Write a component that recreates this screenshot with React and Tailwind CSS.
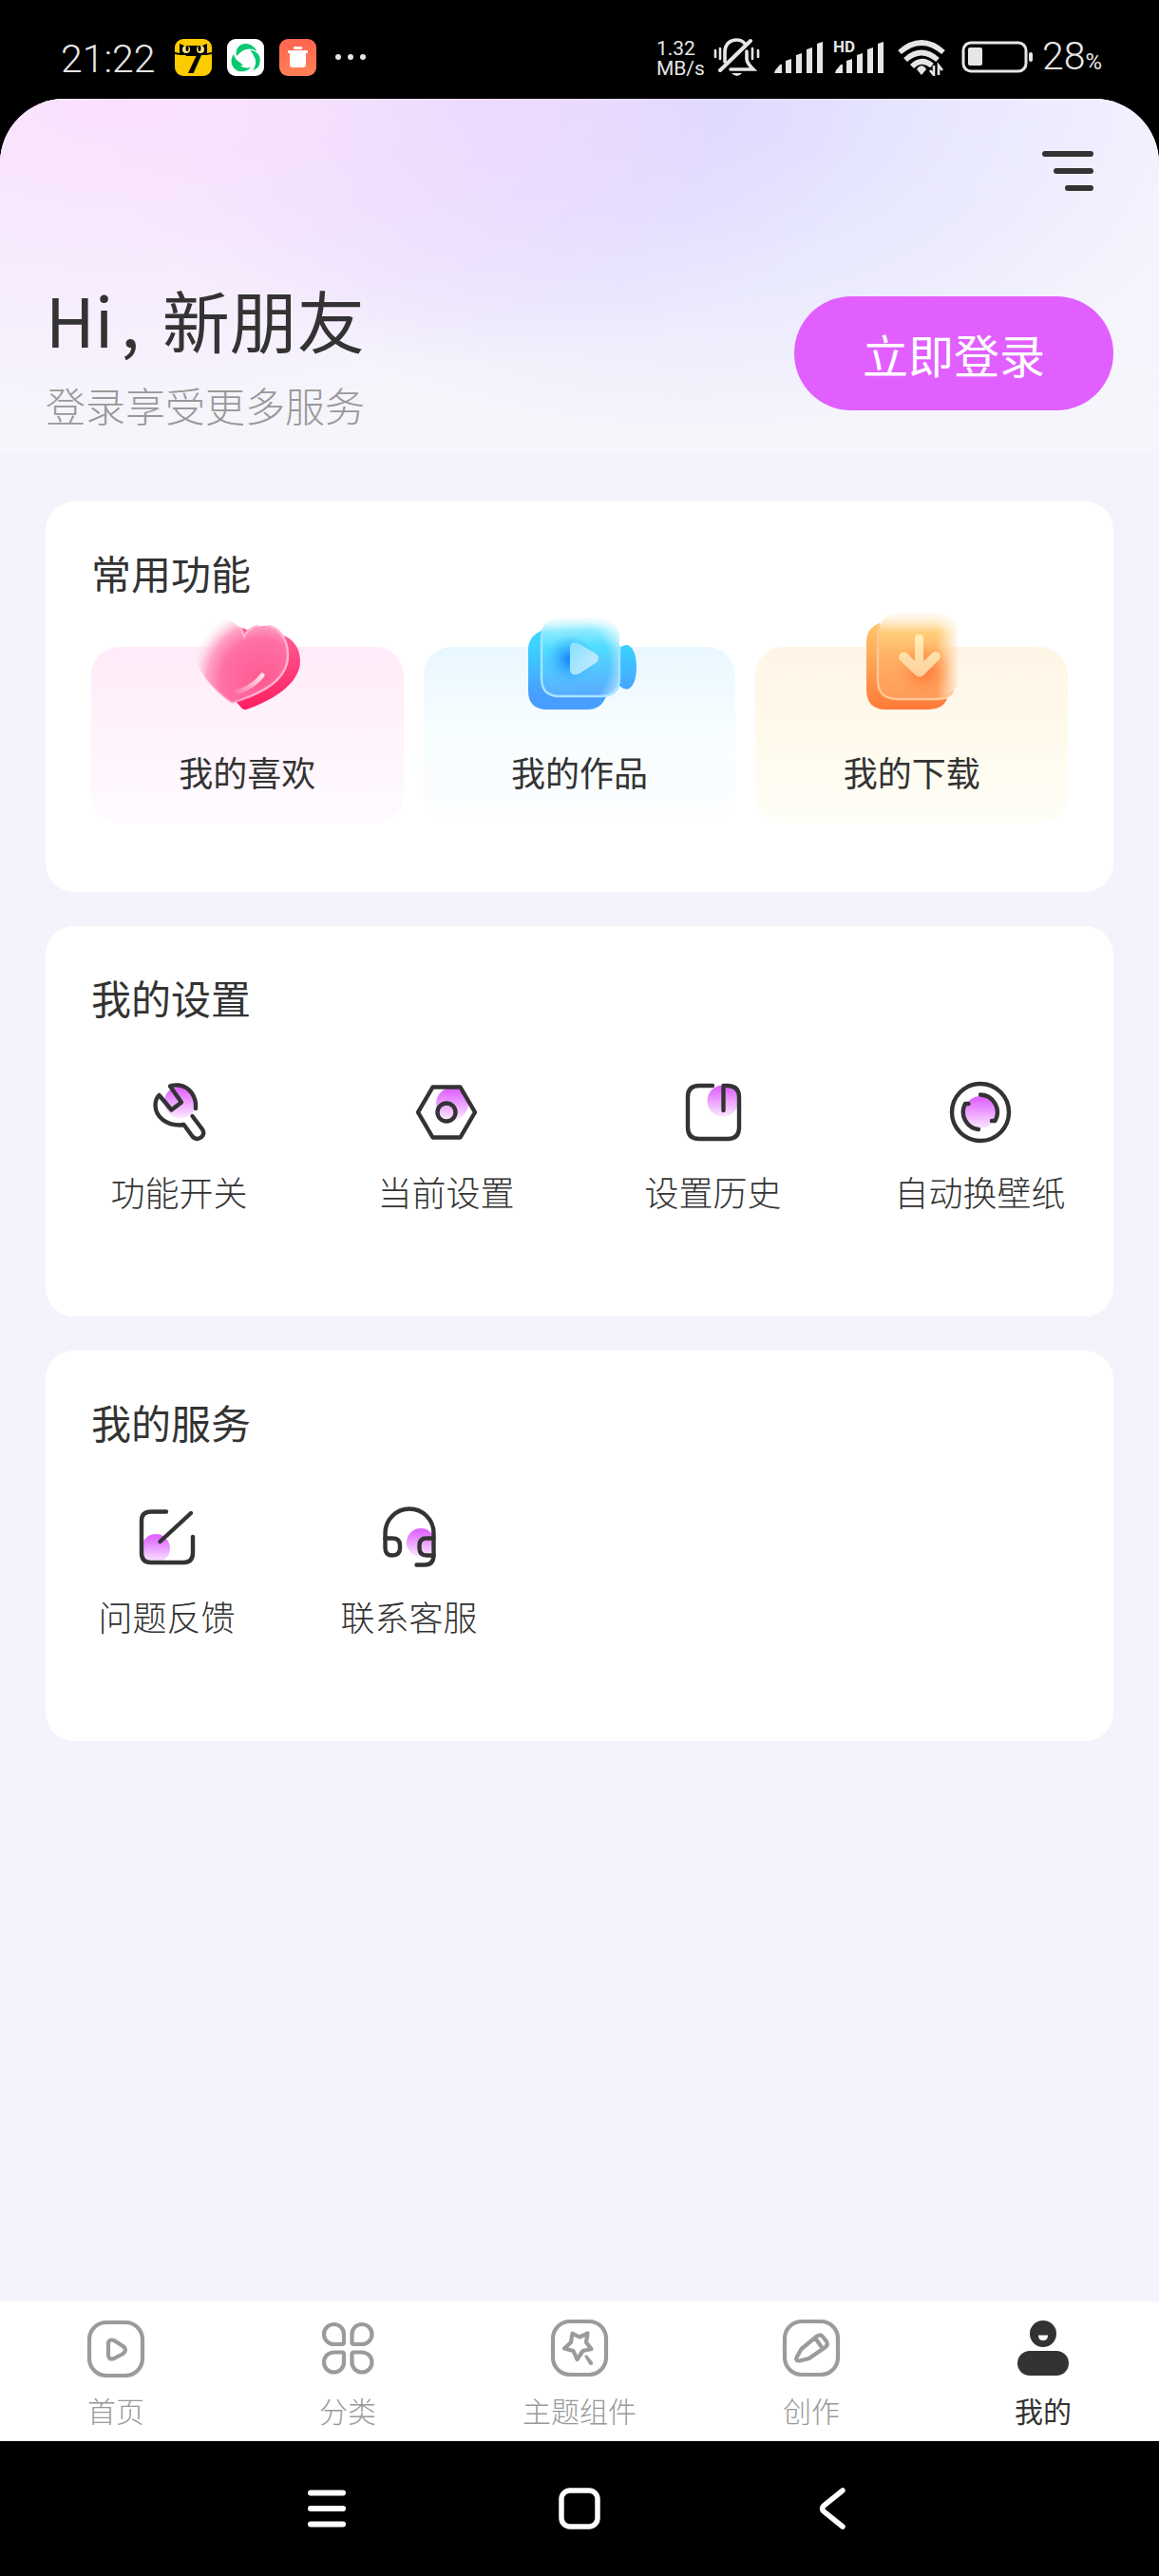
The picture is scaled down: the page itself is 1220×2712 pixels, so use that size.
import React, { useState } from 'react';

// ─── Status bar ───────────────────────────────────────────────────────────────
const SIGNAL_BARS = [
    'M3 34 L8 28 Q10 27 10 29 V37 H2 Z',
    'M14 24 L20 22 V37 H14 Z',
    'M25 18 L31 16 V37 H25 Z',
    'M36 12 L42 10 V37 H36 Z',
    'M47 6 L53 4 V37 H47 Z',
];

const StatusBar = () => (
    <div className="flex items-center justify-between h-[104px] pt-4 pl-16 pr-[60px] text-[#e6e6e6] font-['Roboto',sans-serif]">
        <div className="flex items-center">
            <span className="pt-1 text-[41px] leading-10 font-light mr-5">21:22</span>
            <div className="flex items-center gap-4">
                <svg className="w-[39px] h-[39px] overflow-visible" viewBox="0 0 39 39">
                    <rect width="39" height="39" rx="9" fill="#fccb00" />
                    <text x="20" y="36" textAnchor="middle" fontFamily="Roboto" fontWeight="900" fontSize="32" fill="#000">7</text>
                    <path d="M5 5 L10 7 H29 L34 5 V15 L39 14 V16 L33 17 H6 L0 16 V14 L5 15 Z" fill="#000" />
                    <ellipse cx="12" cy="11" rx="4" ry="4" fill="#ffe680" />
                    <ellipse cx="27" cy="11" rx="4" ry="4" fill="#ffe680" />
                    <ellipse cx="13" cy="10" rx="1.5" ry="3" fill="#000" />
                    <ellipse cx="26" cy="10" rx="1.5" ry="3" fill="#000" />
                </svg>
                <svg className="w-[39px] h-[39px]" viewBox="0 0 39 39">
                    <rect width="39" height="39" rx="9" fill="#fff" />
                    <path d="M10 18 C8 10 14 4 21 5 C26 6 30 9 31 13 C27 10 23 10 20 11 C15 12 13 16 10 18 Z" fill="#07c972" />
                    <path d="M24 12 C32 12 37 19 34 27 C33 30 31 32 27 33 C31 28 31 22 28 18 C27 15 26 14 24 12 Z" fill="#07c972" />
                    <path d="M7 16 C2 23 5 31 12 34 C17 35 22 34 25 30 C20 31 16 30 14 28 L17 28 L14 25 C10 23 8 20 7 16 Z" fill="#07c972" />
                </svg>
                <svg className="w-[39px] h-[39px]" viewBox="0 0 39 39">
                    <defs>
                        <linearGradient id="trash" x1="0" y1="0" x2="0" y2="1">
                            <stop offset="0" stopColor="#ff6550" />
                            <stop offset="1" stopColor="#ff8055" />
                        </linearGradient>
                    </defs>
                    <rect width="39" height="39" rx="9" fill="url(#trash)" />
                    <rect x="15" y="8" width="9" height="3" rx="1" fill="#fff" />
                    <rect x="9" y="12" width="21" height="3" rx="1" fill="#fff" />
                    <path d="M11 14 H28 V27 Q28 30 25 30 H14 Q11 30 11 27 Z" fill="#fff" />
                </svg>
            </div>
            <div className="flex gap-[7px] ml-5">
                <span className="w-1.5 h-1.5 rounded-full bg-[#e6e6e6]" />
                <span className="w-1.5 h-1.5 rounded-full bg-[#e6e6e6]" />
                <span className="w-1.5 h-1.5 rounded-full bg-[#e6e6e6]" />
            </div>
        </div>

        <div className="flex items-center gap-[10px]">
            <div className="w-[50px] pt-1 text-[21px] leading-[21px]">
                <div>1.32</div>
                <div>MB/s</div>
            </div>
            {/* Muted bell */}
            <svg className="w-[52px] h-10" viewBox="0 0 52 40" fill="none" stroke="#e6e6e6" strokeWidth="3.6" strokeLinecap="round">
                <path d="M12 25 V15 C12 6 18 2 24 2 C28 2 31 3 33 6" />
                <path d="M39 3 L7 34" strokeWidth="4" />
                <path d="M35 14 V22 C35 26 38 29 42 33 H18" />
                <path d="M19 37 H30 Q25 43 19 37 Z" fill="#e6e6e6" stroke="none" />
                <path d="M2 13 V20 M7 11 V22 M41 11 V22 M47 13 V20" strokeWidth="2.6" />
            </svg>
            <svg className="w-[54px] h-10" viewBox="0 0 54 40" fill="#e6e6e6">
                {SIGNAL_BARS.map((d) => <path key={d} d={d} />)}
            </svg>
            <svg className="w-[58px] h-10" viewBox="0 0 58 40" fill="#e6e6e6">
                {SIGNAL_BARS.map((d) => <path key={d} d={d} />)}
                <text x="0" y="15" fontFamily="Roboto" fontWeight="700" fontSize="17">HD</text>
            </svg>
            <svg className="w-[54px] h-10" viewBox="0 0 54 40" fill="none" stroke="#e6e6e6" strokeWidth="5.6">
                <path d="M2 15 Q25 -5 48 15" />
                <path d="M8 23 Q25 8 42 23" />
                <path d="M15 30 Q25 20 36 29" />
                <path d="M25 29 Q29 30 30 33 L25 39 L20 33 Q21 30 25 29 Z" fill="#e6e6e6" stroke="none" />
                <path d="M38 29 V39 L34 34 M43 39 V29 L47 34" strokeWidth="2.6" />
            </svg>
            <svg className="w-[78px] h-10" viewBox="0 0 78 40" fill="none">
                <rect x="5" y="5" width="66" height="30" rx="8" stroke="#e6e6e6" strokeWidth="3" />
                <rect x="10" y="10" width="15" height="19" rx="2" fill="#e6e6e6" />
                <rect x="74" y="15" width="4" height="10" rx="2" fill="#e6e6e6" />
            </svg>
            <div className="flex items-baseline pt-1">
                <span className="text-[41px] leading-10 font-light">28</span>
                <span className="text-[24px] leading-10">%</span>
            </div>
        </div>
    </div>
);

// ─── Colour icons of the feature tiles ────────────────────────────────────────
const HeartIcon = () => (
    <svg className="w-[120px] h-[108px]" viewBox="0 0 120 108" fill="none">
        <defs>
            <linearGradient id="heartBack" x1="0" y1="20" x2="0" y2="105" gradientUnits="userSpaceOnUse">
                <stop offset="0" stopColor="#ff5f93" />
                <stop offset="1" stopColor="#ff1f62" />
            </linearGradient>
            <radialGradient id="heartFront" cx="75" cy="72" r="76" gradientUnits="userSpaceOnUse">
                <stop offset="0" stopColor="#ff5a92" />
                <stop offset="0.55" stopColor="#ff70a5" />
                <stop offset="0.75" stopColor="#ffa3c5" />
                <stop offset="1" stopColor="#fff0f8" stopOpacity="0" />
            </radialGradient>
            <linearGradient id="heartEdge" x1="10" y1="60" x2="60" y2="50" gradientUnits="userSpaceOnUse">
                <stop offset="0" stopColor="#ffc3da" stopOpacity="0" />
                <stop offset="1" stopColor="#ffb3d0" />
            </linearGradient>
            <linearGradient id="heartShine" x1="49" y1="86" x2="76" y2="69" gradientUnits="userSpaceOnUse">
                <stop offset="0" stopColor="#fff" stopOpacity="0.15" />
                <stop offset="1" stopColor="#fff" stopOpacity="0.8" />
            </linearGradient>
        </defs>
        <path d="M59 105 C86 96 116 78 116 54 C116 40 108 30 98 27 C80 30 66 24 58 20 Q54 18 52 22 L46 94 L54 103 Q57 106 59 105 Z" fill="url(#heartBack)" />
        <path d="M44 98 C24 84 4 62 4 40 C4 22 18 10 34 10 C46 10 53 18 57 28 C62 20 72 16 82 17 C95 19 103 32 103 48 C103 74 76 88 44 98 Z" fill="url(#heartFront)" />
        <path d="M44 98 C24 84 4 62 4 40 M52 18 Q55 22 57 28 C60 22 66 18 72 17 M82 17 C95 19 103 32 103 48 C103 74 76 88 44 98" stroke="url(#heartEdge)" strokeWidth="2.4" />
        <path d="M50 86 Q66 82 76 69" stroke="url(#heartShine)" strokeWidth="5" strokeLinecap="round" />
    </svg>
);

const VideoIcon = () => (
    <svg className="w-[120px] h-[108px]" viewBox="0 0 120 108" fill="none">
        <defs>
            <linearGradient id="videoBack" x1="0" y1="36" x2="0" y2="90" gradientUnits="userSpaceOnUse">
                <stop offset="0" stopColor="#3ad4ff" />
                <stop offset="1" stopColor="#489eff" />
            </linearGradient>
            <linearGradient id="videoFront" x1="58" y1="8" x2="62" y2="92" gradientUnits="userSpaceOnUse">
                <stop offset="0" stopColor="#d8f8ff" stopOpacity="0.3" />
                <stop offset="0.16" stopColor="#8eebff" />
                <stop offset="0.38" stopColor="#4fdcff" />
                <stop offset="1" stopColor="#5aaaff" />
            </linearGradient>
            <radialGradient id="videoFade" cx="44" cy="58" r="72" gradientUnits="userSpaceOnUse">
                <stop offset="0.66" stopColor="#fff" />
                <stop offset="1" stopColor="#fff" stopOpacity="0.05" />
            </radialGradient>
            <mask id="videoMask">
                <rect width="120" height="108" fill="url(#videoFade)" />
            </mask>
            <radialGradient id="videoShade" cx="50" cy="52" r="26" gradientUnits="userSpaceOnUse">
                <stop offset="0.1" stopColor="#1a8cff" />
                <stop offset="1" stopColor="#3fb4ff" stopOpacity="0" />
            </radialGradient>
            <linearGradient id="videoPlay" x1="50" y1="40" x2="78" y2="60" gradientUnits="userSpaceOnUse">
                <stop offset="0" stopColor="#8be2ff" />
                <stop offset="1" stopColor="#c4e9ff" />
            </linearGradient>
        </defs>
        <path d="M102 40 Q108 36 112 37.5 Q120 43 120 60 Q120 78 112 83 Q108 85 102 80 Z" fill="url(#videoBack)" />
        <path d="M20 22 Q6 28 6 42 V85 Q6 105 26 105 H68 Q83 105 88 91 H40 L20 72 Z" fill="url(#videoBack)" />
        <rect x="19" y="8" width="83" height="83" rx="20" fill="url(#videoFront)" mask="url(#videoMask)" />
        <path d="M20 26 V72 Q20 91 39 91 H82 Q102 91 102 72 V38" stroke="#a6e4ff" strokeWidth="2.4" />
        <circle cx="50" cy="52" r="26" fill="url(#videoShade)" />
        <path d="M50 40 Q50 33 58 35 L77 46 Q83 51 77 56 L60 67 Q50 71 50 62 Z" fill="url(#videoPlay)" />
    </svg>
);

const DownloadIcon = () => (
    <svg className="w-[120px] h-[108px]" viewBox="0 0 120 108" fill="none">
        <defs>
            <linearGradient id="dlBack" x1="0" y1="20" x2="0" y2="105" gradientUnits="userSpaceOnUse">
                <stop offset="0" stopColor="#ffc266" />
                <stop offset="1" stopColor="#ff7a3a" />
            </linearGradient>
            <linearGradient id="dlFront" x1="60" y1="3" x2="60" y2="95" gradientUnits="userSpaceOnUse">
                <stop offset="0" stopColor="#fff3dc" stopOpacity="0.3" />
                <stop offset="0.22" stopColor="#ffcf7c" />
                <stop offset="0.5" stopColor="#ffb062" />
                <stop offset="1" stopColor="#ff9a5a" />
            </linearGradient>
            <linearGradient id="dlFade" x1="86" y1="0" x2="109" y2="0" gradientUnits="userSpaceOnUse">
                <stop offset="0" stopColor="#fff" />
                <stop offset="1" stopColor="#fff" stopOpacity="0.05" />
            </linearGradient>
            <mask id="dlMask">
                <rect width="120" height="108" fill="url(#dlFade)" />
            </mask>
            <radialGradient id="dlShade" cx="72" cy="64" r="30" gradientUnits="userSpaceOnUse">
                <stop offset="0.1" stopColor="#ff7a3c" />
                <stop offset="1" stopColor="#ff9a50" stopOpacity="0" />
            </radialGradient>
            <linearGradient id="dlArrow" x1="0" y1="26" x2="0" y2="70" gradientUnits="userSpaceOnUse">
                <stop offset="0" stopColor="#fff0b4" />
                <stop offset="1" stopColor="#ffcf9e" />
            </linearGradient>
        </defs>
        <path d="M26 14 Q12 19 12 34 V84 Q12 105 33 105 H78 Q92 105 97 94 H44 L24 76 Z" fill="url(#dlBack)" />
        <rect x="24" y="3" width="84" height="91" rx="21" fill="url(#dlFront)" mask="url(#dlMask)" />
        <path d="M26 15 Q24 19 24 25 V74 Q24 94 45 94 H86 Q98 94 103 86" stroke="#ffc894" strokeWidth="2.4" />
        <circle cx="72" cy="64" r="30" fill="url(#dlShade)" />
        <path d="M63 30 Q63 26 67.5 26 Q72 26 72 30 V54 L82 45 Q86 43 89 46 Q91 50 88 53 L72 69 Q68 72 64 69 L47 53 Q45 49 48 46 Q51 43 55 46 L63 54 Z" fill="url(#dlArrow)" />
    </svg>
);

// ─── Line icons with a purple spot ────────────────────────────────────────────
const SpotIcon = ({ id, cx, cy, r, children }) => (
    <svg className="w-[72px] h-[72px]" viewBox="0 0 72 72" fill="none" stroke="#333" strokeWidth="4.4" strokeLinecap="round" strokeLinejoin="round">
        <defs>
            <linearGradient id={id} x1="0" y1="0" x2="0" y2="1">
                <stop offset="0.1" stopColor="#e066ff" />
                <stop offset="1" stopColor="#fbe8ff" />
            </linearGradient>
        </defs>
        <circle cx={cx} cy={cy} r={r} fill={`url(#${id})`} stroke="none" />
        {children}
    </svg>
);

const WrenchIcon = () => (
    <SpotIcon id="spotWrench" cx="37" cy="25" r="17">
        <path d="M14.5 18 L27.5 33.5 L38 25.5 L26 8.5 Q28 7 35 7.5 C47 9 54 20 53 32 M49.5 40 L60 54 Q63 59 58.5 62.5 Q54 65.5 50 62 L40.5 49 Q38.5 49.5 36 49.5 C22 49.5 11 41 10.5 29 Q10.5 22 14.5 18" />
    </SpotIcon>
);

const HexagonIcon = () => (
    <SpotIcon id="spotHexagon" cx="42" cy="27" r="17">
        <path d="M21.5 9.5 H50.5 L66 36 L50.5 62.5 H21.5 L6 36 Z" />
        <circle cx="36" cy="36" r="9.5" />
    </SpotIcon>
);

const HistoryIcon = () => (
    <SpotIcon id="spotHistory" cx="46" cy="24" r="16.5">
        <path d="M35 8 H21 Q9 8 9 20 V52 Q9 64 21 64 H51 Q63 64 63 52 V20 Q63 8 50 8 H46.5 V34" />
    </SpotIcon>
);

const WallpaperIcon = () => (
    <SpotIcon id="spotWallpaper" cx="36" cy="36" r="17">
        <circle cx="36" cy="36" r="30" />
        <path d="M36 17.5 A18.5 18.5 0 0 1 51.5 45 H48 M34 54 A18.5 18.5 0 0 1 20 27 H23.5" />
    </SpotIcon>
);

const FeedbackIcon = () => (
    <SpotIcon id="spotFeedback" cx="24" cy="48" r="15">
        <path d="M35 9.5 H19 Q9 9.5 9 19 V53 Q9 63 19 63 H53 Q63 63 63 53 V36 M61 11 L28.5 41" />
    </SpotIcon>
);

const HeadsetIcon = () => (
    <SpotIcon id="spotHeadset" cx="48" cy="42" r="15">
        <path d="M10.5 38 V32 A25.5 25.5 0 0 1 61.5 32 V55 Q61.5 65.5 52 65.5 H43.5" />
        <path d="M10.5 37.5 H18 Q26 37.5 26 45 V48 Q26 55.5 18 55.5 Q10.5 55.5 10.5 48 Z M61.5 37.5 H54 Q46.5 37.5 46.5 45 V48 Q46.5 55.5 54 55.5 H61.5" />
    </SpotIcon>
);

// ─── Tab bar icons ────────────────────────────────────────────────────────────
const TabIcon = ({ children }) => (
    <svg className="w-[72px] h-[72px]" viewBox="0 0 72 72" fill="none" stroke="#9b9b9b" strokeWidth="4.2" strokeLinecap="round" strokeLinejoin="round">
        {children}
    </svg>
);

const HomeIcon = () => (
    <TabIcon>
        <rect x="8" y="8" width="56" height="56" rx="18" />
        <path d="M28 31 Q28 25 34 27 L43.5 33 Q48.5 37 43.5 41 L34 46 Q28 48 28 42 Z" />
    </TabIcon>
);

const CategoryIcon = () => (
    <TabIcon>
        <path d="M32 29 V20.5 A10.5 10.5 0 1 0 21.5 31 H30 Q32 31 32 29 Z" />
        <path d="M40.5 29 V20.5 A10.5 10.5 0 1 1 51 31 H42.5 Q40.5 31 40.5 29 Z" />
        <path d="M32 41.5 V50 A10.5 10.5 0 1 1 21.5 39.5 H30 Q32 39.5 32 41.5 Z" />
        <path d="M40.5 41.5 V50 A10.5 10.5 0 1 0 51 39.5 H42.5 Q40.5 39.5 40.5 41.5 Z" />
    </TabIcon>
);

const ThemeIcon = () => (
    <TabIcon>
        <rect x="8" y="7" width="56" height="56" rx="18" />
        <path d="M28.5 19.5 L36 23.5 L44.5 19.5 L43 29 L48.5 36 L39.5 38 L33.5 47 L29.5 38 L20 35.5 L27 29 Z" />
        <path d="M41 43 L44 42.5 L50 50 Q51 53 48 53 Q46 53 45.5 51 Z" fill="#9b9b9b" stroke="none" />
    </TabIcon>
);

const CreateIcon = () => (
    <TabIcon>
        <rect x="8" y="7" width="56" height="56" rx="18" />
        <path d="M20.5 45 L25.5 36 L42 22.5 Q45.5 20 48 23 L52 28 Q54 31.5 51 34 L33.5 46 L23.5 48.5 Q19 48.5 20.5 45 Z M40.5 25 L47.5 35" />
    </TabIcon>
);

const MineIcon = () => (
    <svg className="w-[72px] h-[72px]" viewBox="0 0 72 72" fill="#333">
        <circle cx="36" cy="20" r="14" />
        <path d="M31 21.5 H41 Q41 27 36 27 Q31 27 31 21.5 Z" fill="#fff" />
        <rect x="9" y="38" width="54" height="26" rx="13" />
    </svg>
);

const FEATURES = [
    { label: '我的喜欢', icon: HeartIcon, tint: 'bg-linear-to-b from-[#ffebf9] to-[#fffbff]' },
    { label: '我的作品', icon: VideoIcon, tint: 'bg-linear-to-b from-[#e9f7ff] via-[#f8feff] to-[#fcfdff]' },
    { label: '我的下载', icon: DownloadIcon, tint: 'bg-linear-to-b from-[#fff5e6] via-[#fffaec] to-[#fefef7]' },
];

const SETTINGS = [
    { label: '功能开关', icon: WrenchIcon },
    { label: '当前设置', icon: HexagonIcon },
    { label: '设置历史', icon: HistoryIcon },
    { label: '自动换壁纸', icon: WallpaperIcon },
];

const SERVICES = [
    { label: '问题反馈', icon: FeedbackIcon },
    { label: '联系客服', icon: HeadsetIcon },
];

const TABS = [
    { label: '首页', icon: HomeIcon },
    { label: '分类', icon: CategoryIcon },
    { label: '主题组件', icon: ThemeIcon },
    { label: '创作', icon: CreateIcon },
    { label: '我的', icon: MineIcon },
];

const Card = ({ title, children }) => (
    <section className="bg-white rounded-[30px] pt-12">
        <h2 className="px-12 text-[42px] leading-[54px]">{title}</h2>
        {children}
    </section>
);

const IconButton = ({ label, icon: Icon }) => (
    <button type="button" className="flex flex-col items-center">
        <Icon />
        <span className="mt-5 text-[36px] leading-[54px] font-light whitespace-nowrap">{label}</span>
    </button>
);

const App = () => {
    const [tab, setTab] = useState('我的');

    return (
        <div lang="zh-CN" className="min-h-screen flex flex-col bg-black text-[#333] font-['Noto_Sans_CJK_SC',sans-serif]">
            <StatusBar />

            <div className="flex-1 flex flex-col bg-[#f3f3fc] rounded-t-[68px] overflow-hidden">
                <header className="flex flex-col px-12 pt-[55px] pb-[26px] bg-[radial-gradient(ellipse_52%_90%_at_10%_0%,#fae0fd_0%,#fae0fd00_100%),radial-gradient(ellipse_34%_75%_at_42%_0%,#e6d5ff_0%,#e6d5ff00_100%),radial-gradient(ellipse_46%_95%_at_60%_0%,#dddcff_0%,#dddcff00_100%),linear-gradient(#f5f4ff,#f5f5fb)]">
                    <button type="button" aria-label="菜单" className="self-end mr-[21px] flex flex-col items-end justify-between h-[42px]">
                        <span className="w-[54px] h-1.5 rounded-full bg-[#333]" />
                        <span className="w-[42px] h-1.5 rounded-full bg-[#333]" />
                        <span className="w-[30px] h-1.5 rounded-full bg-[#333]" />
                    </button>
                    <div className="flex items-center justify-between mt-[86px]">
                        <div>
                            <h1 className="text-[71px] leading-[96px]">Hi<span className="mx-2">,</span> 新朋友</h1>
                            <p className="mt-[18px] text-[42px] leading-[50px] font-light text-[#999]">登录享受更多服务</p>
                        </div>
                        <button type="button" className="mt-1.5 w-[336px] h-[120px] rounded-full bg-[#e15fff] text-white text-[48px]">立即登录</button>
                    </div>
                </header>

                <main className="flex-1 flex flex-col gap-9 px-12 pt-[51px] pb-9">
                    <Card title="常用功能">
                        <div className="grid grid-cols-3 gap-[21px] px-12 mt-[51px] pb-[72px]">
                            {FEATURES.map(({ label, icon: Icon, tint }) => (
                                <button key={label} type="button" className={`flex flex-col items-center rounded-[30px] pb-7 ${tint}`}>
                                    <span className="-mt-[39px]"><Icon /></span>
                                    <span className="mt-[35px] text-[36px] leading-[54px]">{label}</span>
                                </button>
                            ))}
                        </div>
                    </Card>

                    <Card title="我的设置">
                        <div className="grid grid-cols-4 mt-[58px] pb-[105px]">
                            {SETTINGS.map((item) => <IconButton key={item.label} {...item} />)}
                        </div>
                    </Card>

                    <Card title="我的服务">
                        <div className="grid grid-cols-[repeat(4,255px)] mt-[58px] pb-[105px]">
                            {SERVICES.map((item) => <IconButton key={item.label} {...item} />)}
                        </div>
                    </Card>
                </main>

                <nav className="grid grid-cols-5 bg-white pt-[14px] pb-3">
                    {TABS.map(({ label, icon: Icon }) => (
                        <button key={label} type="button" onClick={() => setTab(label)} className="flex flex-col items-center">
                            <Icon />
                            <span className={`mt-[7px] text-[30px] leading-[42px] ${tab === label ? 'text-[#333]' : 'font-light text-[#999]'}`}>{label}</span>
                        </button>
                    ))}
                </nav>
            </div>

            {/* System navigation */}
            <div className="flex justify-center gap-[222px] py-[49px]">
                <button type="button" aria-label="最近任务">
                    <svg className="w-11 h-11" viewBox="0 0 44 44" stroke="#fff" strokeWidth="6" strokeLinecap="round">
                        <path d="M5 5.5 H39 M5 22 H39 M5 38.5 H39" />
                    </svg>
                </button>
                <button type="button" aria-label="主屏幕">
                    <svg className="w-11 h-11" viewBox="0 0 44 44" fill="none" stroke="#fff" strokeWidth="5.5">
                        <rect x="3" y="3" width="38" height="38" rx="9" />
                    </svg>
                </button>
                <button type="button" aria-label="返回">
                    <svg className="w-11 h-11" viewBox="0 0 44 44" fill="none" stroke="#fff" strokeWidth="5.5" strokeLinecap="round">
                        <path d="M33 3 L13 19 Q10 22 13 25 L33 41" />
                    </svg>
                </button>
            </div>
        </div>
    );
};

export default App;
